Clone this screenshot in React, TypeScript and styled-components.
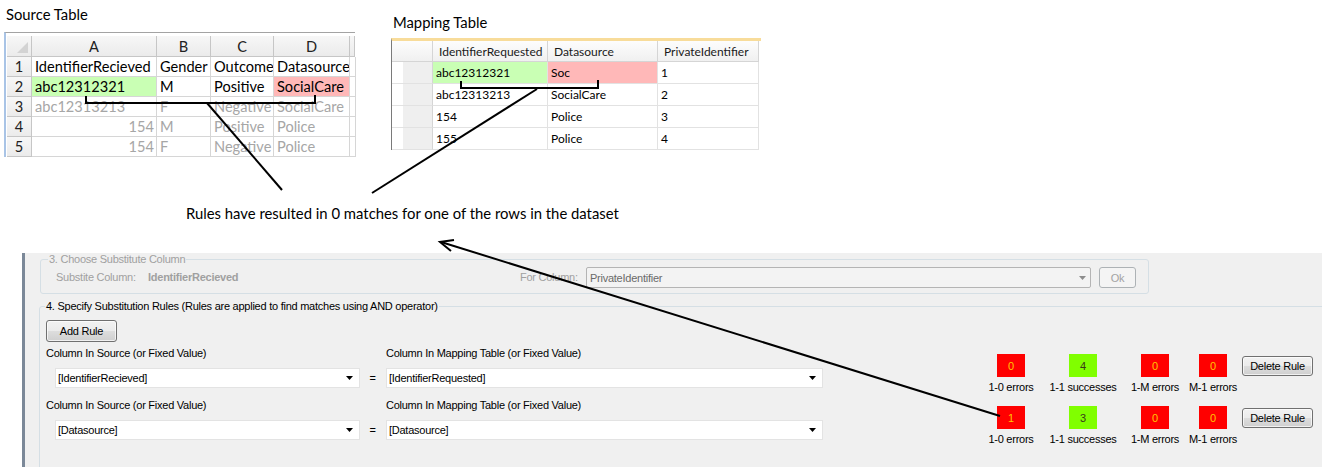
import React from "react";
import styled, { createGlobalStyle } from "styled-components";

const Global = createGlobalStyle`
  html, body { margin: 0; padding: 0; background: #fff; }
  body { width: 1322px; height: 467px; overflow: hidden; }
`;

const Page = styled.div`
  position: relative;
  width: 1322px;
  height: 467px;
  display: flex;
  flex-direction: column;
  background: #fff;
  overflow: hidden;
`;

const Top = styled.div`
  height: 253px;
  flex: none;
  display: flex;
  flex-direction: column;
`;

const TablesRow = styled.div`
  display: flex;
  align-items: flex-start;
`;

const Block = styled.div<{ $ml: number; $mt: number }>`
  margin-left: ${(p) => p.$ml}px;
  margin-top: ${(p) => p.$mt}px;
  display: flex;
  flex-direction: column;
`;

const Title = styled.div<{ $mb: number }>`
  font-family: Lato, "Open Sans", sans-serif;
  font-size: 14.8px;
  line-height: 18px;
  color: #000;
  padding-left: 2px;
  margin-bottom: ${(p) => p.$mb}px;
`;

/* ---------- Excel-like source sheet ---------- */
const Sheet = styled.div`
  display: grid;
  grid-template-columns: 25px 125px 54px 63px 76px 5px;
  grid-template-rows: 21px;
  grid-auto-rows: 20px;
  border-top: 1px solid #a3a3a3;
  padding-top: 3px;
  border-left: 2px solid #a9c4e6;
  padding-left: 1px;
  font-family: Lato, "Open Sans", sans-serif;
  font-size: 14.6px;
  width: fit-content;
`;

const SheetHead = styled.div<{ $corner?: boolean }>`
  position: relative;
  box-sizing: border-box;
  background: linear-gradient(#f7f7f7, #ebebeb);
  border-right: 1px solid #c6c6c6;
  border-bottom: 1px solid #c6c6c6;
  display: flex;
  align-items: center;
  justify-content: center;
  color: #222;
  overflow: hidden;
  &::after {
    content: "";
    display: ${(p) => (p.$corner ? "block" : "none")};
    position: absolute;
    right: 3px;
    bottom: 3px;
    width: 0;
    height: 0;
    border-left: 11px solid transparent;
    border-bottom: 11px solid #d3d3d3;
  }
`;

const SheetCell = styled.div<{ $fill?: string; $muted?: boolean; $right?: boolean }>`
  box-sizing: border-box;
  border-right: 1px solid #d6d6d6;
  border-bottom: 1px solid #d6d6d6;
  background: ${(p) => p.$fill ?? "#fff"};
  color: ${(p) => (p.$muted ? "#a6a6a6" : "#000")};
  display: flex;
  align-items: center;
  justify-content: ${(p) => (p.$right ? "flex-end" : "flex-start")};
  padding: 0 2px 0 3px;
  white-space: nowrap;
  overflow: hidden;
`;

/* ---------- mapping grid ---------- */
const MapGrid = styled.div`
  display: grid;
  grid-template-columns: 41px 115px 110px 101px;
  grid-template-rows: 21px;
  grid-auto-rows: 22px;
  border-top: 3px solid #f8dc9a;
  border-left: 1px solid #7a7a7a;
  padding-right: 2px;
  font-family: Lato, "Open Sans", sans-serif;
  font-size: 12px;
  width: fit-content;
`;

const MapHead = styled.div`
  box-sizing: border-box;
  background: linear-gradient(#fdfdfd, #f0f0f0);
  border-right: 1px solid #d5d5d5;
  border-bottom: 1px solid #d5d5d5;
  display: flex;
  align-items: center;
  padding-left: 6px;
  color: #1a1a1a;
  white-space: nowrap;
  overflow: hidden;
`;

const MapRowHead = styled.div`
  box-sizing: border-box;
  background: linear-gradient(90deg, #fff 0 11px, #efefef 11px);
  border-right: 1px solid #d5d5d5;
  border-bottom: 1px solid #e2e2e2;
`;

const MapCell = styled.div<{ $fill?: string }>`
  box-sizing: border-box;
  background: ${(p) => p.$fill ?? "#fff"};
  border-right: 1px solid #e2e2e2;
  border-bottom: 1px solid #e2e2e2;
  display: flex;
  align-items: center;
  padding-left: 3px;
  color: #000;
  white-space: nowrap;
  overflow: hidden;
`;

const Caption = styled.div`
  margin: 47px 0 0 186px;
  font-family: Lato, "Open Sans", sans-serif;
  font-size: 14.85px;
  line-height: 18px;
  color: #000;
`;

/* ---------- WinForms panel ---------- */
const Panel = styled.div`
  flex: 1;
  margin-left: 22px;
  background: #f0f0f0;
  border-left: 3px solid #7b8898;
  padding-left: 14px;
  display: flex;
  flex-direction: column;
  gap: 6px;
  overflow: hidden;
  font-family: "Liberation Sans", Arial, sans-serif;
  font-size: 11px;
  letter-spacing: -0.25px;
  color: #000;
`;

const Group = styled.fieldset<{ $width: string; $ml?: number; $height?: number }>`
  box-sizing: border-box;
  margin: 0 0 0 ${(p) => p.$ml ?? 0}px;
  padding: 0 0 4px 0;
  min-width: 0;
  width: ${(p) => p.$width};
  ${(p) => (p.$height ? `height: ${p.$height}px; flex: none;` : "")}
  border: 1px solid #d5dfe5;
  border-radius: 3px;
`;

const Legend = styled.legend<{ $disabled?: boolean; $ml: number }>`
  padding: 0 1px;
  margin-left: ${(p) => p.$ml}px;
  line-height: 13px;
  color: ${(p) => (p.$disabled ? "#a0a0a0" : "#000")};
`;

const ChooseRow = styled.div`
  display: flex;
  align-items: center;
  height: 23px;
  padding-left: 15px;
`;

const FieldLabel = styled.span<{ $w?: number; $bold?: boolean; $muted?: boolean }>`
  ${(p) => (p.$w ? `width: ${p.$w}px; flex: none;` : "")}
  font-weight: ${(p) => (p.$bold ? 700 : 400)};
  color: ${(p) => (p.$muted ? "#a0a0a0" : "#000")};
  line-height: 13px;
  white-space: nowrap;
`;

const Combo = styled.div<{ $w: number; $disabled?: boolean; $ml?: number }>`
  box-sizing: border-box;
  width: ${(p) => p.$w}px;
  height: ${(p) => (p.$disabled ? 21 : 20)}px;
  margin-left: ${(p) => p.$ml ?? 0}px;
  display: flex;
  align-items: center;
  justify-content: space-between;
  padding: 0 ${(p) => (p.$disabled ? 4 : 6)}px 0 ${(p) => (p.$disabled ? 3 : 2)}px;
  background: ${(p) => (p.$disabled ? "#f3f3f3" : "#fff")};
  border: 1px solid ${(p) => (p.$disabled ? "#b4b4b4" : "#e3e3e3")};
  border-radius: ${(p) => (p.$disabled ? 2 : 0)}px;
  color: ${(p) => (p.$disabled ? "#6a6a6a" : "#000")};
  white-space: nowrap;
`;

const WinButton = styled.button<{ $w: number; $h: number; $disabled?: boolean; $ml?: number; $mt?: number }>`
  box-sizing: border-box;
  flex: none;
  width: ${(p) => p.$w}px;
  height: ${(p) => p.$h}px;
  margin: ${(p) => p.$mt ?? 0}px 0 0 ${(p) => p.$ml ?? 0}px;
  padding: 0;
  font: inherit;
  letter-spacing: inherit;
  color: ${(p) => (p.$disabled ? "#a3a3a3" : "#000")};
  border: 1px solid ${(p) => (p.$disabled ? "#adb2b5" : "#707070")};
  border-radius: 3px;
  background: ${(p) =>
    p.$disabled
      ? "#f4f4f4"
      : "linear-gradient(#f2f2f2 0%, #ebebeb 50%, #dddddd 51%, #cfcfcf 100%)"};
  box-shadow: ${(p) => (p.$disabled ? "none" : "inset 0 0 0 1px rgba(255,255,255,0.7)")};
`;

const RulesBody = styled.div`
  display: flex;
  flex-direction: column;
  padding-left: 6px;
`;

const RuleRow = styled.div<{ $mt: number }>`
  display: flex;
  align-items: flex-start;
  height: 41px;
  margin-top: ${(p) => p.$mt}px;
`;

const Fields = styled.div`
  display: grid;
  grid-template-columns: 314px 26px 437px;
  grid-template-rows: 13px 20px;
  row-gap: 8px;
  align-items: center;
`;

const Equals = styled.span`
  grid-column: 2;
  grid-row: 2;
  justify-self: center;
  padding-right: 1px;
`;

const Stats = styled.div`
  display: flex;
  margin-left: 157px;
  margin-top: 7px;
`;

const Stat = styled.div<{ $w: number }>`
  width: ${(p) => p.$w}px;
  display: flex;
  flex-direction: column;
  align-items: center;
`;

const StatBox = styled.div<{ $ok?: boolean }>`
  width: 28px;
  height: 23px;
  display: flex;
  align-items: center;
  justify-content: center;
  background: ${(p) => (p.$ok ? "#80ff00" : "#ff0000")};
  color: ${(p) => (p.$ok ? "#3a3a1a" : "#ffc400")};
`;

const StatLabel = styled.span`
  margin-top: 4px;
  line-height: 13px;
  white-space: nowrap;
`;

const Overlay = styled.svg`
  position: absolute;
  left: 0;
  top: 0;
  pointer-events: none;
`;

const Arrow = ({ color }: { color: string }) => (
  <svg width="7" height="4" viewBox="0 0 7 4">
    <polygon points="0,0 7,0 3.5,4" fill={color} />
  </svg>
);

type SC = { text?: string; fill?: string; right?: boolean };
const GREEN = "#c9ffb4";
const PINK = "#ffb8b8";

const sourceRows: { n: number; muted: boolean; cells: SC[] }[] = [
  { n: 1, muted: false, cells: [{ text: "IdentifierRecieved" }, { text: "Gender" }, { text: "Outcome" }, { text: "Datasource" }] },
  { n: 2, muted: false, cells: [{ text: "abc12312321", fill: GREEN }, { text: "M" }, { text: "Positive" }, { text: "SocialCare", fill: PINK }] },
  { n: 3, muted: true, cells: [{ text: "abc12313213" }, { text: "F" }, { text: "Negative" }, { text: "SocialCare" }] },
  { n: 4, muted: true, cells: [{ text: "154", right: true }, { text: "M" }, { text: "Positive" }, { text: "Police" }] },
  { n: 5, muted: true, cells: [{ text: "154", right: true }, { text: "F" }, { text: "Negative" }, { text: "Police" }] },
];

const mapRows: SC[][] = [
  [{ text: "abc12312321", fill: GREEN }, { text: "Soc", fill: PINK }, { text: "1" }],
  [{ text: "abc12313213" }, { text: "SocialCare" }, { text: "2" }],
  [{ text: "154" }, { text: "Police" }, { text: "3" }],
  [{ text: "155" }, { text: "Police" }, { text: "4" }],
];

const statDefs = [
  { label: "1-0 errors", w: 62, ok: false },
  { label: "1-1 successes", w: 82, ok: true },
  { label: "1-M errors", w: 62, ok: false },
  { label: "M-1 errors", w: 54, ok: false },
];

const rules = [
  { src: "[IdentifierRecieved]", map: "[IdentifierRequested]", values: ["0", "4", "0", "0"], mt: 5 },
  { src: "[Datasource]", map: "[Datasource]", values: ["1", "3", "0", "0"], mt: 11 },
];

export default function App() {
  return (
    <>
      <Global />
      <Page>
        <Top>
          <TablesRow>
            <Block $ml={4} $mt={5}>
              <Title $mb={9}>Source Table</Title>
              <Sheet>
                <SheetHead $corner />
                {["A", "B", "C", "D"].map((l) => (
                  <SheetHead key={l}>{l}</SheetHead>
                ))}
                <SheetHead />
                {sourceRows.map((r) => (
                  <React.Fragment key={r.n}>
                    <SheetHead>{r.n}</SheetHead>
                    {r.cells.map((c, i) => (
                      <SheetCell key={i} $fill={c.fill} $muted={r.muted} $right={c.right}>
                        {c.text}
                      </SheetCell>
                    ))}
                    <SheetCell />
                  </React.Fragment>
                ))}
              </Sheet>
            </Block>
            <Block $ml={36} $mt={13}>
              <Title $mb={7}>Mapping Table</Title>
              <MapGrid>
                <MapHead />
                <MapHead>IdentifierRequested</MapHead>
                <MapHead>Datasource</MapHead>
                <MapHead>PrivateIdentifier</MapHead>
                {mapRows.map((row, ri) => (
                  <React.Fragment key={ri}>
                    <MapRowHead />
                    {row.map((c, ci) => (
                      <MapCell key={ci} $fill={c.fill}>
                        {c.text}
                      </MapCell>
                    ))}
                  </React.Fragment>
                ))}
              </MapGrid>
            </Block>
          </TablesRow>
          <Caption>Rules have resulted in 0 matches for one of the rows in the dataset</Caption>
        </Top>

        <Panel>
          <Group $width="1109px" $ml={1}>
            <Legend $disabled $ml={7}>3. Choose Substitute Column</Legend>
            <ChooseRow>
              <FieldLabel $w={92} $muted>Substite Column:</FieldLabel>
              <FieldLabel $w={372} $bold $muted>IdentifierRecieved</FieldLabel>
              <FieldLabel $w={66} $muted>For Column:</FieldLabel>
              <Combo $w={505} $disabled>
                <span>PrivateIdentifier</span>
                <Arrow color="#8c8c8c" />
              </Combo>
              <WinButton $w={37} $h={21} $ml={8} $disabled>
                Ok
              </WinButton>
            </ChooseRow>
          </Group>

          <Group $width="calc(100% + 12px)" $height={190}>
            <Legend $ml={5}>4. Specify Substitution Rules (Rules are applied to find matches using AND operator)</Legend>
            <RulesBody>
              <WinButton $w={71} $h={22} $mt={7}>
                Add Rule
              </WinButton>
              {rules.map((r, ri) => (
                <RuleRow key={ri} $mt={r.mt}>
                  <Fields>
                    <FieldLabel>Column In Source (or Fixed Value)</FieldLabel>
                    <span />
                    <FieldLabel>Column In Mapping Table (or Fixed Value)</FieldLabel>
                    <Combo $w={305} $ml={9}>
                      <span>{r.src}</span>
                      <Arrow color="#000" />
                    </Combo>
                    <Equals>=</Equals>
                    <Combo $w={437}>
                      <span>{r.map}</span>
                      <Arrow color="#000" />
                    </Combo>
                  </Fields>
                  <Stats>
                    {statDefs.map((s, si) => (
                      <Stat key={si} $w={s.w}>
                        <StatBox $ok={s.ok}>{r.values[si]}</StatBox>
                        <StatLabel>{s.label}</StatLabel>
                      </Stat>
                    ))}
                  </Stats>
                  <WinButton $w={71} $h={20} $ml={2} $mt={9}>
                    Delete Rule
                  </WinButton>
                </RuleRow>
              ))}
            </RulesBody>
          </Group>
        </Panel>

        <Overlay width="1322" height="467" viewBox="0 0 1322 467">
          <g fill="none" stroke="#000" strokeWidth="2">
            <polyline points="86,96 86,103 315,103 315,95" />
            <line x1="207" y1="103" x2="282" y2="190" />
            <polyline points="461,81 461,88 598,88 598,80" />
            <line x1="537" y1="89" x2="372" y2="193" />
            <line x1="1000" y1="416" x2="441" y2="242" />
            <polyline points="454,240 440,242 451,251" />
          </g>
        </Overlay>
      </Page>
    </>
  );
}
